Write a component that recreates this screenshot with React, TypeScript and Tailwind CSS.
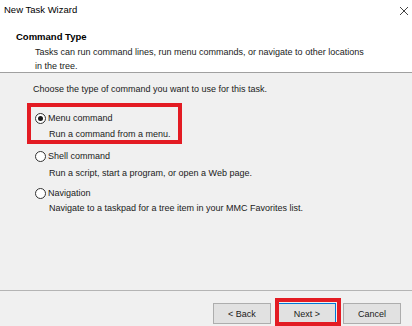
import React from "react";

function Radio({ checked }: { checked?: boolean }) {
  return (
    <span className="flex h-[11px] w-[11px] shrink-0 items-center justify-center rounded-full border border-[#333333] bg-white">
      {checked && <span className="h-[5px] w-[5px] rounded-full bg-[#1a1a1a]" />}
    </span>
  );
}

function Option({
  label,
  desc,
  checked,
  className,
  descClass,
}: {
  label: string;
  desc: string;
  checked?: boolean;
  className: string;
  descClass: string;
}) {
  return (
    <div className={className}>
      <div className="flex h-[14px] items-center gap-[2px] pl-[35px]">
        <Radio checked={checked} />
        <span>{label}</span>
      </div>
      <div className={"h-[14px] pl-[49px] leading-[14px] " + descClass}>{desc}</div>
    </div>
  );
}

function WizButton({ children, primary }: { children: React.ReactNode; primary?: boolean }) {
  return (
    <button
      type="button"
      className={
        "flex h-[21px] w-[58px] items-center justify-center border bg-[#e1e1e1] text-[9px] text-[#1a1a1a] " +
        (primary ? "border-[#0078d7]" : "border-[#adadad]")
      }
    >
      {children}
    </button>
  );
}

export default function App() {
  return (
    <div
      className="relative flex h-[326px] w-[412px] flex-col overflow-hidden bg-[#f0f0f0] text-[9px] leading-[14px] text-[#1a1a1a]"
      style={{ fontFamily: '"Liberation Sans", Arial, sans-serif' }}
    >
      {/* header */}
      <div className="h-[73px] shrink-0 border-b border-[#a0a0a0] bg-white">
        <div className="flex h-[20px] items-center justify-between pl-[4px] pr-[3px] text-[9.5px] text-black">
          <span>New Task Wizard</span>
          <svg width="10" height="10" viewBox="0 0 10 10" className="mt-[1px]">
            <path d="M1 1 L9 9 M9 1 L1 9" stroke="#444" strokeWidth="1" />
          </svg>
        </div>
        <div className="mt-[10px] pl-[16px] text-[9.5px] font-bold text-black">Command Type</div>
        <div className="mt-[1px] whitespace-nowrap pl-[35px]">
          Tasks can run command lines, run menu commands, or navigate to other locations
          <br />
          in the tree.
        </div>
      </div>

      {/* body */}
      <div className="flex-1">
        <div className="mt-[9px] pl-[33px]">Choose the type of command you want to use for this task.</div>
        <Option
          className="mt-[15px]"
          descClass="mt-[2px]"
          checked
          label="Menu command"
          desc="Run a command from a menu."
        />
        <Option
          className="mt-[8px]"
          descClass="mt-[3px]"
          label="Shell command"
          desc="Run a script, start a program, or open a Web page."
        />
        <Option
          className="mt-[6px]"
          descClass="mt-[1px]"
          label="Navigation"
          desc="Navigate to a taskpad for a tree item in your MMC Favorites list."
        />
      </div>

      {/* footer */}
      <div className="flex h-[36px] shrink-0 justify-end gap-[7px] border-t border-[#b4b4b4] pr-[11px] pt-[12px]">
        <WizButton>&lt; Back</WizButton>
        <WizButton primary>Next &gt;</WizButton>
        <WizButton>Cancel</WizButton>
      </div>

      {/* red annotation boxes */}
      <div className="pointer-events-none absolute left-[27px] top-[103px] h-[41px] w-[155px] border-4 border-[#e31b23]" />
      <div className="pointer-events-none absolute left-[275px] top-[298px] h-[28px] w-[66px] border-4 border-[#e31b23]" />
    </div>
  );
}
